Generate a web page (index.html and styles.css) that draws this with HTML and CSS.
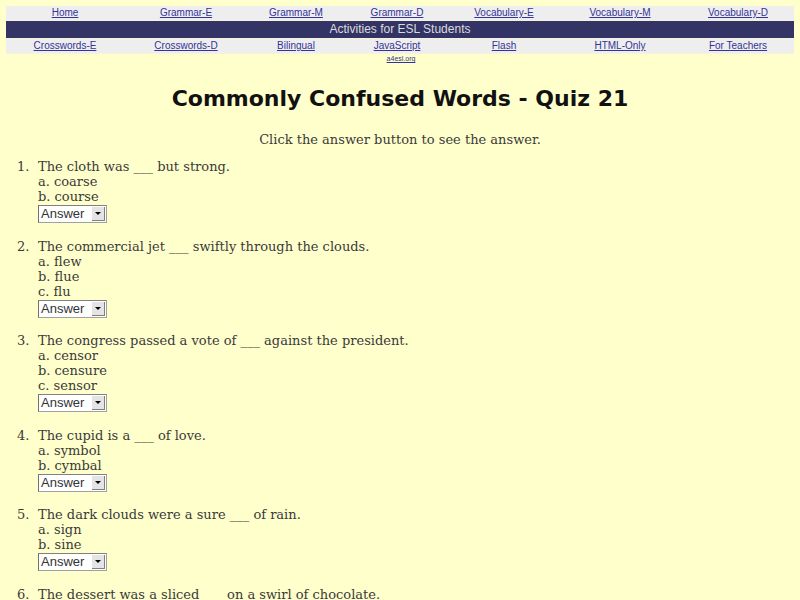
FILE: index.html
```html
<!DOCTYPE html>
<html>
<head>
<meta charset="utf-8">
<title>Commonly Confused Words - Quiz 21</title>
<link rel="stylesheet" href="styles.css">
</head>
<body>
<nav class="nav">
  <div class="nav-row">
    <a href="#">Home</a>
    <a href="#">Grammar-E</a>
    <a href="#">Grammar-M</a>
    <a href="#">Grammar-D</a>
    <a href="#">Vocabulary-E</a>
    <a href="#">Vocabulary-M</a>
    <a href="#">Vocabulary-D</a>
  </div>
  <div class="nav-band">Activities for ESL Students</div>
  <div class="nav-row">
    <a href="#">Crosswords-E</a>
    <a href="#">Crosswords-D</a>
    <a href="#">Bilingual</a>
    <a href="#">JavaScript</a>
    <a href="#">Flash</a>
    <a href="#">HTML-Only</a>
    <a href="#">For Teachers</a>
  </div>
  <div class="site"><a href="#">a4esl.org</a></div>
</nav>

<h1 class="title">Commonly Confused Words - Quiz 21</h1>
<p class="intro">Click the answer button to see the answer.</p>

<ol class="quiz">
  <li>
    <div>The cloth was ___ but strong.</div>
    <div>a. coarse</div>
    <div>b. course</div>
    <div class="answer"><span class="answer-text">Answer</span><span class="answer-btn"><span class="tri"></span></span></div>
  </li>
  <li>
    <div>The commercial jet ___ swiftly through the clouds.</div>
    <div>a. flew</div>
    <div>b. flue</div>
    <div>c. flu</div>
    <div class="answer"><span class="answer-text">Answer</span><span class="answer-btn"><span class="tri"></span></span></div>
  </li>
  <li>
    <div>The congress passed a vote of ___ against the president.</div>
    <div>a. censor</div>
    <div>b. censure</div>
    <div>c. sensor</div>
    <div class="answer"><span class="answer-text">Answer</span><span class="answer-btn"><span class="tri"></span></span></div>
  </li>
  <li>
    <div>The cupid is a ___ of love.</div>
    <div>a. symbol</div>
    <div>b. cymbal</div>
    <div class="answer"><span class="answer-text">Answer</span><span class="answer-btn"><span class="tri"></span></span></div>
  </li>
  <li>
    <div>The dark clouds were a sure ___ of rain.</div>
    <div>a. sign</div>
    <div>b. sine</div>
    <div class="answer"><span class="answer-text">Answer</span><span class="answer-btn"><span class="tri"></span></span></div>
  </li>
  <li>
    <div>The dessert was a sliced ___ on a swirl of chocolate.</div>
    <div>a. pear</div>
    <div>b. pare</div>
    <div>c. pair</div>
    <div class="answer"><span class="answer-text">Answer</span><span class="answer-btn"><span class="tri"></span></span></div>
  </li>
</ol>
</body>
</html>
```
FILE: styles.css
```css
html, body {
  margin: 0;
  background: #ffffcc;
}
body {
  padding: 6px 6px 0 6px;
  color: #3a3a3a;
  font-family: "DejaVu Serif", serif;
}
.nav {
  font-family: "Liberation Sans", Arial, sans-serif;
  font-size: 10px;
}
.nav-row {
  display: grid;
  grid-template-columns: 118px 124px 96px 106px 108px 124px 1fr;
  background: #eeeeee;
  height: 14px;
  line-height: 14px;
  border-bottom: 1px solid #f4f4dc;
}
.nav-row a {
  text-align: center;
  justify-self: center;
}
.nav a {
  color: #333399;
  text-decoration: underline;
}
.nav-band {
  background: #333366;
  color: #dcdcdc;
  font-size: 12px;
  text-align: center;
  height: 17px;
  line-height: 17px;
  border-bottom: 1px solid #f4f4dc;
}
.site {
  font-size: 7px;
  line-height: 9px;
  text-align: center;
  padding-left: 2px;
}
.title {
  margin: 21px 0 0 0;
  text-align: center;
  font-family: "DejaVu Sans", sans-serif;
  font-weight: bold;
  font-size: 22px;
  line-height: 30px;
  color: #111111;
}
.intro {
  margin: 18px 0 0 0;
  text-align: center;
  font-size: 13px;
  line-height: 15px;
}
.quiz {
  list-style: none;
  counter-reset: q;
  margin: 12px 0 0 0;
  padding-left: 11px;
  font-size: 13px;
  line-height: 15px;
}
.quiz li {
  display: grid;
  grid-template-columns: 21px auto;
  justify-content: start;
  counter-increment: q;
  margin-bottom: 15.5px;
}
.quiz li::before {
  content: counter(q) ".";
  grid-column: 1;
  grid-row: 1;
}
.quiz li > * {
  grid-column: 2;
}
.answer {
  display: flex;
  width: 69px;
  height: 18px;
  margin-top: 1px;
  box-sizing: border-box;
  border: 1px solid #a0a0a0;
  border-left-color: #707070;
  border-top-color: #808080;
  background: #ffffff;
  font-family: "Liberation Sans", Arial, sans-serif;
  font-size: 13px;
  line-height: 16px;
  color: #333333;
}
.answer-text {
  flex: 1;
  padding-left: 2px;
}
.answer-btn {
  width: 12px;
  margin: 1px;
  background: #e4e4e4;
  border-right: 1px solid #808080;
  border-bottom: 1px solid #808080;
  display: flex;
  align-items: center;
  justify-content: center;
}
.tri {
  width: 0;
  height: 0;
  border-left: 3px solid transparent;
  border-right: 3px solid transparent;
  border-top: 3px solid #000000;
}
```
